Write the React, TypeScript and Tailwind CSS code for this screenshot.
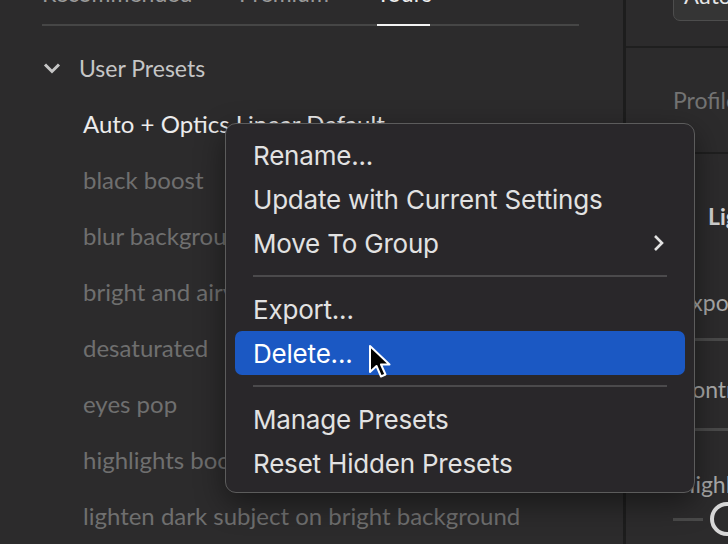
import React from 'react';

const presets = [
    'Auto + Optics Linear Default',
    'black boost',
    'blur background',
    'bright and airy',
    'desaturated',
    'eyes pop',
    'highlights boost',
    'lighten dark subject on bright background',
];

type MenuItem = { label: string; sub?: boolean; active?: boolean } | 'sep';

const menuItems: MenuItem[] = [
    { label: 'Rename...' },
    { label: 'Update with Current Settings' },
    { label: 'Move To Group', sub: true },
    'sep',
    { label: 'Export...' },
    { label: 'Delete...', active: true },
    'sep',
    { label: 'Manage Presets' },
    { label: 'Reset Hidden Presets' },
];

const listFont = { fontFamily: 'Lato, "Open Sans", sans-serif' };
const menuFont = { fontFamily: 'Inter, "Open Sans", sans-serif' };

function Cursor() {
    return (
        <svg width="24" height="36" viewBox="0 0 24 36" className="absolute left-[368px] top-[344px]">
            <path
                d="M2 2 L2 28 L8.5 22 L13 32.5 L17.5 30.5 L13 20.5 L21.5 20.5 Z"
                fill="#000"
                stroke="#fff"
                strokeWidth="2"
                strokeLinejoin="round"
            />
        </svg>
    );
}

export default function App() {
    return (
        <div className="relative w-[728px] h-[544px] overflow-hidden flex bg-[#2c2b2c]">
            {/* Left: preset browser */}
            <div className="w-[623px] shrink-0 h-full flex flex-col bg-[#2c2b2c]" style={listFont}>
                {/* tabs, clipped at top */}
                <div className="flex -mt-[24px] h-[40px] items-center text-[23px] text-[#9a9a9a] pl-[42px] whitespace-nowrap">
                    <span className="w-[197px]">Recommended</span>
                    <span className="w-[137px]">Premium</span>
                    <span className="text-[#eeeeee]">Yours</span>
                </div>
                <div className="flex ml-[42px] mt-[13px] h-[3px]">
                    <div className="w-[335px] bg-[#464646]" />
                    <div className="w-[53px] bg-[#f2f2f2]" />
                    <div className="w-[149px] bg-[#464646]" />
                </div>

                {/* group header */}
                <div className="flex items-center h-[40px] mt-[25px] pl-[42px] text-[23px] text-[#c6c6c6]">
                    <svg width="20" height="20" viewBox="0 0 20 20" className="mr-[17px]">
                        <path d="M3 6.5 L10 13.5 L17 6.5" fill="none" stroke="#c6c6c6" strokeWidth="3" />
                    </svg>
                    <span>User Presets</span>
                </div>

                <div className="flex flex-col mt-[11px]">
                    {presets.map((p, i) => (
                        <div
                            key={p}
                            className={`h-[56px] flex items-center pl-[83px] text-[24px] whitespace-nowrap ${i === 0 ? 'text-[#ececec]' : 'text-[#6f6f6f]'}`}
                        >
                            {p}
                        </div>
                    ))}
                </div>
            </div>

            <div className="w-[3px] shrink-0 h-full bg-[#1d1d1d]" />

            {/* Right: edit panel */}
            <div className="flex-1 min-w-0 overflow-hidden h-full flex flex-col whitespace-nowrap" style={listFont}>
                <div className="h-[46px]">
                    <div className="ml-[47px] -mt-[20px] h-[41px] w-[90px] rounded-[7px] border border-[#4d4d4d] bg-[#353535] flex items-end pb-[8px] pl-[10px] text-[22px] text-[#e6e6e6]">
                        Auto
                    </div>
                </div>
                <div className="h-[2px] bg-[#1f1f1f]" />
                <div className="h-[104px] flex items-center pl-[47px] text-[23px] text-[#737373]">Profile</div>
                <div className="h-[2px] bg-[#1f1f1f]" />
                <div className="h-[60px] mt-[32px] flex items-center pl-[82px] text-[23px] font-bold text-[#d2d2d2]">Light</div>
                <div className="flex flex-col pl-[47px]">
                    <div className="h-[40px] mt-[36px] pl-[5px] flex items-center text-[23px] text-[#a8a8a8]">Exposure</div>
                    <div className="h-[3px] mt-[16px] bg-[#4a4a4a]" />
                    <div className="h-[40px] mt-[28px] pl-[4px] flex items-center text-[23px] text-[#a8a8a8]">Contrast</div>
                    <div className="h-[3px] mt-[19px] bg-[#4a4a4a]" />
                    <div className="h-[40px] mt-[33px] pl-[5px] flex items-center text-[23px] text-[#a8a8a8]">Highlights</div>
                    <div className="flex items-center -mt-[2px]">
                        <div className="w-[30px] h-[3px] bg-[#4a4a4a] shrink-0" />
                        <div className="w-[34px] h-[34px] rounded-full border-[4px] border-[#d8d8d8] bg-[#2c2b2c] ml-[7px] shrink-0" />
                    </div>
                </div>
            </div>

            {/* Context menu */}
            <div
                className="absolute left-[225px] top-[123px] w-[470px] h-[370px] rounded-[11px] border border-[#5c5c5c] bg-[#29272a] shadow-[0_10px_30px_rgba(0,0,0,0.45)] pt-[9px] px-[9px]"
                style={menuFont}
            >
                {menuItems.map((item, i) =>
                    item === 'sep' ? (
                        <div key={i} className="h-[22px] flex items-center px-[18px]">
                            <div className="h-[2px] w-full bg-[#4b4a4c]" />
                        </div>
                    ) : (
                        <div
                            key={i}
                            className={`h-[44px] flex items-center justify-between pl-[18px] pr-[20px] rounded-[7px] text-[26px] tracking-[-0.2px] ${item.active ? 'bg-[#1b58c3] text-white' : 'text-[#e2e2e2]'}`}
                        >
                            <span>{item.label}</span>
                            {item.sub && (
                                <svg width="14" height="20" viewBox="0 0 14 20">
                                    <path d="M4 3 L11 10 L4 17" fill="none" stroke="#e2e2e2" strokeWidth="2.6" />
                                </svg>
                            )}
                        </div>
                    )
                )}
            </div>

            <Cursor />
        </div>
    );
}
